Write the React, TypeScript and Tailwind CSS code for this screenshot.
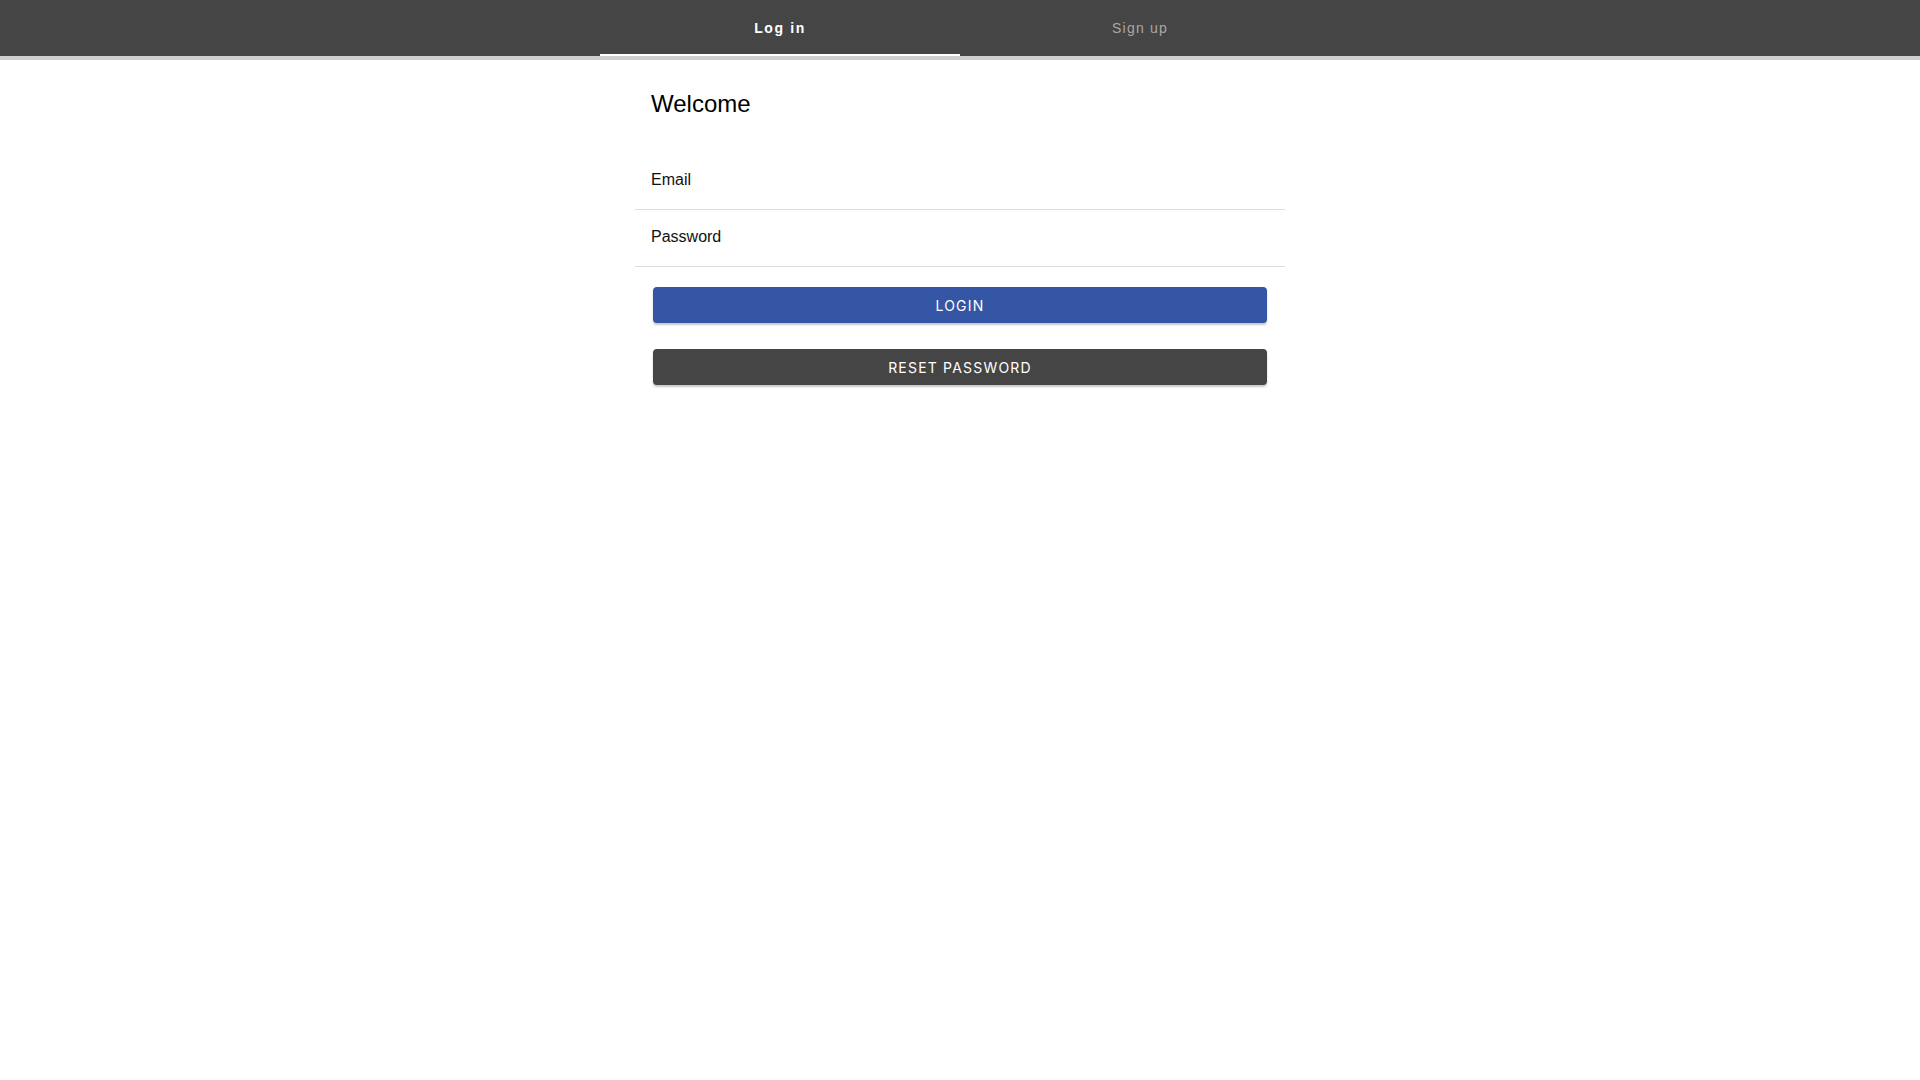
import React from "react";

const AuthTabs = ({ active }: { active: "login" | "signup" }) => {
    return (
        <div className="bg-[#454545]">
            <div className="mx-auto flex w-[720px]">
                <button
                    className={
                        active === "login"
                            ? "flex h-[56px] flex-1 items-center justify-center border-b-2 border-white pt-[2px] text-[14px] font-bold tracking-[1.6px] text-white"
                            : "flex h-[56px] flex-1 items-center justify-center border-b-2 border-transparent pt-[2px] text-[14px] tracking-[1.2px] text-[#a8a8a8]"
                    }
                >
                    Log in
                </button>
                <button
                    className={
                        active === "signup"
                            ? "flex h-[56px] flex-1 items-center justify-center border-b-2 border-white pt-[2px] text-[14px] font-bold tracking-[1.6px] text-white"
                            : "flex h-[56px] flex-1 items-center justify-center border-b-2 border-transparent pt-[2px] text-[14px] tracking-[1.2px] text-[#a8a8a8]"
                    }
                >
                    Sign up
                </button>
            </div>
        </div>
    );
};

const App = () => {
    const [email, setEmail] = React.useState("");
    const [password, setPassword] = React.useState("");

    return (
        <div className="min-h-screen bg-white font-['Liberation_Sans',Arial,sans-serif]">
            <AuthTabs active="login" />
            <div className="h-[4px] bg-[#cfcfcf]" />

            <div className="mx-auto w-[650px]">
                <h1 className="mt-[30px] px-4 text-[24px] leading-[28px] text-black">
                    Welcome
                </h1>

                {/* Fields */}
                <div className="mt-[35px]">
                    <div className="border-b border-[#dddddd]">
                        <input
                            type="email"
                            value={email}
                            onChange={(e) => setEmail(e.target.value)}
                            placeholder="Email"
                            className="block w-full px-4 pt-[15px] pb-[17px] text-[16px] leading-[24px] text-[#111] outline-none placeholder:text-[#111]"
                        />
                    </div>
                    <div className="border-b border-[#dddddd]">
                        <input
                            type="password"
                            value={password}
                            onChange={(e) => setPassword(e.target.value)}
                            placeholder="Password"
                            className="block w-full px-4 pt-[15px] pb-[17px] text-[16px] leading-[24px] text-[#111] outline-none placeholder:text-[#111]"
                        />
                    </div>
                </div>

                {/* Actions */}
                <div className="mx-[18px] mt-[20px] flex flex-col gap-[26px]">
                    <button className="h-[36px] rounded-[4px] bg-[#3556a5] font-['Inter',sans-serif] text-[14px] font-normal tracking-[1.2px] text-white shadow-[0_2px_2px_rgba(0,0,0,0.22)]">
                        LOGIN
                    </button>
                    <button className="h-[36px] rounded-[4px] bg-[#454545] font-['Inter',sans-serif] text-[14px] font-normal tracking-[1.2px] text-white shadow-[0_2px_2px_rgba(0,0,0,0.22)]">
                        RESET PASSWORD
                    </button>
                </div>
            </div>
        </div>
    );
};

export default App;
